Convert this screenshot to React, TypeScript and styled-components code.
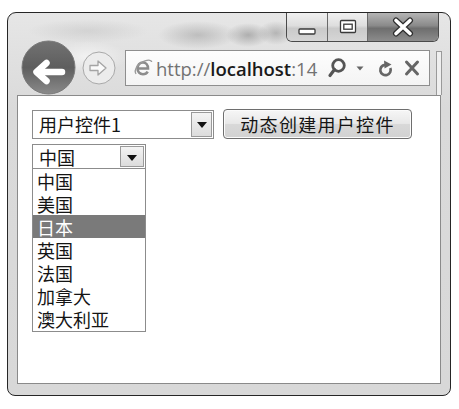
import styled, { createGlobalStyle } from 'styled-components'

const Global = createGlobalStyle`
	body {
		margin: 0;
		background: #fff;
		font-family: 'Noto Sans CJK SC', 'Noto Sans', sans-serif;
	}
`

const cjk = `'Noto Sans CJK SC', 'Noto Sans', sans-serif`

const Window = styled.div`
	box-sizing: border-box;
	margin: 12px 0 0 7px;
	width: 444px;
	height: 384px;
	border: 1px solid #262626;
	border-radius: 9px 9px 8px 8px;
	background:
		radial-gradient(ellipse 40px 14px at 190px 22px, rgba(120, 120, 120, 0.35), transparent),
		radial-gradient(ellipse 22px 12px at 240px 22px, rgba(110, 110, 110, 0.45), transparent),
		radial-gradient(ellipse 18px 12px at 268px 20px, rgba(110, 110, 110, 0.4), transparent),
		radial-gradient(ellipse 60px 12px at 80px 18px, rgba(160, 160, 160, 0.25), transparent),
		radial-gradient(ellipse 40px 16px at 80px 44px, rgba(255, 255, 255, 0.6), transparent),
		linear-gradient(#e6e6e6, #dadada 25%, #d8d8d8);
	display: flex;
	flex-direction: column;
	overflow: hidden;
`

const TitleBar = styled.div`
	height: 28px;
	display: flex;
	justify-content: flex-end;
	padding-right: 11px;
`

const CaptionGroup = styled.div`
	display: flex;
	height: 28px;
	border: 1px solid #4a4a4a;
	border-top: none;
	border-radius: 0 0 6px 6px;
	overflow: hidden;
`

const CaptionButton = styled.div<{ $w: number; $close?: boolean }>`
	width: ${(p) => p.$w}px;
	display: flex;
	align-items: center;
	justify-content: center;
	background: ${(p) =>
		p.$close
			? 'linear-gradient(#b4b4b4, #8a8a8a 45%, #6e6e6e 55%, #8c8c8c)'
			: 'linear-gradient(#f0f0f0, #dedede 45%, #cacaca 55%, #d6d6d6)'};
	& + & {
		border-left: 1px solid #6a6a6a;
	}
	svg {
		display: block;
	}
`

const NavBar = styled.div`
	height: 54px;
	display: flex;
	align-items: center;
	padding-left: 13px;
`

const BackButton = styled.div`
	width: 55px;
	height: 55px;
	margin-top: -2px;
	svg {
		display: block;
	}
`

const ForwardButton = styled.div`
	width: 34px;
	height: 34px;
	margin-left: 6px;
	svg {
		display: block;
	}
`

const AddressBox = styled.div`
	box-sizing: border-box;
	margin-left: 9px;
	width: 305px;
	height: 36px;
	border: 1px solid #8e8e8e;
	background: linear-gradient(#fdfdfd, #f4f4f4);
	display: flex;
	align-items: center;
	padding-left: 7px;
	font-family: 'Open Sans', 'Noto Sans', sans-serif;
	font-size: 18.5px;
	color: #727272;
`

const Url = styled.span`
	margin-left: 3px;
	b {
		color: #1a1a1a;
		font-weight: 600;
	}
`

const AddrIcons = styled.div`
	margin-left: auto;
	margin-right: 9px;
	display: flex;
	align-items: center;
	svg {
		display: block;
	}
`

const TabEdge = styled.div`
	align-self: stretch;
	margin: 10px 0 0 6px;
	width: 4px;
	border: 1px solid #9a9a9a;
	border-bottom: none;
	background: #efefef;
`

const Content = styled.div`
	flex: 1;
	margin: 0 9px 11px 9px;
	background: #fff;
	border: 1px solid #8a8a8a;
	padding: 13px 0 0 14px;
`

const Row = styled.div`
	display: flex;
	align-items: center;
	gap: 9px;
`

const Select = styled.div<{ $w: number; $h: number }>`
	box-sizing: border-box;
	width: ${(p) => p.$w}px;
	height: ${(p) => p.$h}px;
	border: 1px solid #8c8c8c;
	display: flex;
	align-items: stretch;
	padding: 1px;
	font-family: ${cjk};
	font-size: 18px;
	color: #141414;
	background: #fff;
`

const SelectText = styled.span`
	flex: 1;
	display: flex;
	align-items: center;
	padding-left: 5px;
	line-height: 1;
`

const DropButton = styled.div<{ $w: number }>`
	box-sizing: border-box;
	width: ${(p) => p.$w}px;
	border: 1px solid #9a9a9a;
	background: linear-gradient(#f4f4f4, #dcdcdc);
	display: flex;
	align-items: center;
	justify-content: center;
	&::after {
		content: '';
		border-left: 5px solid transparent;
		border-right: 5px solid transparent;
		border-top: 6px solid #111;
		margin-top: 2px;
	}
`

const CreateButton = styled.button`
	box-sizing: border-box;
	width: 189px;
	height: 30px;
	border: 1px solid #6e6e6e;
	border-radius: 4px;
	background: linear-gradient(#f6f6f6, #e8e8e8 48%, #d8d8d8 52%, #d2d2d2);
	box-shadow: inset 0 0 0 1px #fbfbfb;
	font-family: ${cjk};
	font-size: 18px;
	letter-spacing: 1.3px;
	color: #141414;
	padding: 0;
	line-height: 1;
`

const DropGroup = styled.div`
	margin-top: 5px;
	width: 114px;
`

const ListBox = styled.div`
	box-sizing: border-box;
	width: 114px;
	border: 1px solid #8c8c8c;
	border-top: none;
	padding: 0 0 1px;
	font-family: ${cjk};
	font-size: 18px;
	color: #141414;
`

const Option = styled.div<{ $selected?: boolean }>`
	height: 23px;
	display: flex;
	align-items: center;
	padding-left: 4px;
	line-height: 1;
	background: ${(p) => (p.$selected ? '#7a7a7a' : 'transparent')};
	color: ${(p) => (p.$selected ? '#fff' : '#141414')};
`

const countries = ['中国', '美国', '日本', '英国', '法国', '加拿大', '澳大利亚']

const BackIcon = () => (
	<svg width="55" height="55" viewBox="0 0 55 55">
		<defs>
			<linearGradient id="bk" x1="0" y1="0" x2="0" y2="1">
				<stop offset="0" stopColor="#727272" />
				<stop offset="0.5" stopColor="#5e5e5e" />
				<stop offset="1" stopColor="#8a8a8a" />
			</linearGradient>
		</defs>
		<circle cx="27.5" cy="27.5" r="26.5" fill="url(#bk)" stroke="#7a7a7a" />
		<path d="M17 32 H41" stroke="#fff" strokeWidth="6.5" strokeLinecap="round" />
		<path d="M25.5 23 L15.5 32 L25.5 41" fill="none" stroke="#fff" strokeWidth="6.5" strokeLinecap="round" strokeLinejoin="round" />
	</svg>
)

const ForwardIcon = () => (
	<svg width="34" height="34" viewBox="0 0 34 34">
		<circle cx="17" cy="17" r="16" fill="#ececec" stroke="#a8a8a8" />
		<path d="M8 14.5 H16 V10 L24 17 L16 24 V19.5 H8 Z" fill="#fafafa" stroke="#a4a4a4" strokeWidth="1.3" strokeLinejoin="round" />
	</svg>
)

const IeLogo = () => (
	<svg width="20" height="20" viewBox="0 0 20 20">
		<path d="M4.5 10.5 H15 C15 6.5 12.8 4.5 10 4.5 C6.8 4.5 4.5 7 4.5 10.5 C4.5 14 6.8 16.2 10 16.2 C12.2 16.2 13.8 15.2 14.7 13.6" fill="none" stroke="#8c8c8c" strokeWidth="2.6" />
		<path d="M3 16 C0.5 12 5 5 12 2.8 C16 1.6 18.5 2.2 18.8 4" fill="none" stroke="#9a9a9a" strokeWidth="1.3" />
	</svg>
)

const SearchIcon = () => (
	<svg width="20" height="22" viewBox="0 0 20 22">
		<circle cx="11.5" cy="8.5" r="5.8" fill="none" stroke="#555" strokeWidth="2.8" />
		<path d="M7.5 12.5 L3 18.5" stroke="#555" strokeWidth="3.2" strokeLinecap="round" />
	</svg>
)

const CaretIcon = () => (
	<svg width="10" height="8" viewBox="0 0 10 8" style={{ margin: '0 13px 0 8px' }}>
		<path d="M1.5 2.5 H8.5 L5 6.5 Z" fill="#666" />
	</svg>
)

const RefreshIcon = () => (
	<svg width="17" height="20" viewBox="0 0 17 20">
		<path d="M12.3 10 A5.2 5.2 0 1 1 7 6.8" fill="none" stroke="#666" strokeWidth="2.7" />
		<path d="M6 2.5 L13.5 6.5 L6.5 10.5 Z" fill="#666" />
	</svg>
)

const CloseIcon = () => (
	<svg width="16" height="18" viewBox="0 0 16 18" style={{ marginLeft: 9 }}>
		<path d="M2.5 3 L13.5 15 M13.5 3 L2.5 15" stroke="#666" strokeWidth="3" strokeLinecap="round" />
	</svg>
)

const MinGlyph = () => (
	<svg width="20" height="20" viewBox="0 0 20 20">
		<rect x="2" y="12" width="16" height="5" rx="1" fill="#fff" stroke="#3a3a3a" strokeWidth="1.3" />
	</svg>
)

const RestoreGlyph = () => (
	<svg width="20" height="20" viewBox="0 0 20 20">
		<rect x="2.5" y="3.5" width="15" height="12" rx="1" fill="#fff" stroke="#3a3a3a" strokeWidth="1.3" />
		<rect x="5.8" y="7.2" width="8.4" height="5" fill="#fff" stroke="#3a3a3a" strokeWidth="1.3" />
	</svg>
)

const CloseGlyph = () => (
	<svg width="22" height="20" viewBox="0 0 22 20">
		<path d="M4 3.5 L18 16.5 M18 3.5 L4 16.5" stroke="#2e2e2e" strokeWidth="6" strokeLinecap="round" />
		<path d="M4 3.5 L18 16.5 M18 3.5 L4 16.5" stroke="#fff" strokeWidth="3.6" strokeLinecap="round" />
	</svg>
)

export default function App() {
	return (
		<>
			<Global />
			<Window>
				<TitleBar>
					<CaptionGroup>
						<CaptionButton $w={40}>
							<MinGlyph />
						</CaptionButton>
						<CaptionButton $w={39}>
							<RestoreGlyph />
						</CaptionButton>
						<CaptionButton $w={70} $close>
							<CloseGlyph />
						</CaptionButton>
					</CaptionGroup>
				</TitleBar>
				<NavBar>
					<BackButton>
						<BackIcon />
					</BackButton>
					<ForwardButton>
						<ForwardIcon />
					</ForwardButton>
					<AddressBox>
						<IeLogo />
						<Url>
							http://<b>localhost</b>:14
						</Url>
						<AddrIcons>
							<SearchIcon />
							<CaretIcon />
							<RefreshIcon />
							<CloseIcon />
						</AddrIcons>
					</AddressBox>
					<TabEdge />
				</NavBar>
				<Content>
					<Row>
						<Select $w={182} $h={29}>
							<SelectText>用户控件1</SelectText>
							<DropButton $w={21} />
						</Select>
						<CreateButton>动态创建用户控件</CreateButton>
					</Row>
					<DropGroup>
						<Select $w={114} $h={25}>
							<SelectText>中国</SelectText>
							<DropButton $w={24} />
						</Select>
						<ListBox>
							{countries.map((c) => (
								<Option key={c} $selected={c === '日本'}>
									{c}
								</Option>
							))}
						</ListBox>
					</DropGroup>
				</Content>
			</Window>
		</>
	)
}
